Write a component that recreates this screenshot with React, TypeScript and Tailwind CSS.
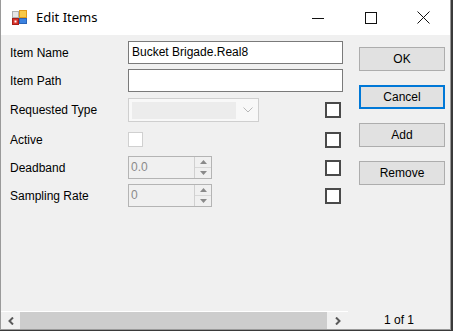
import React from 'react'

const font = { fontFamily: '"Liberation Sans", Arial, sans-serif' }

function AppIcon() {
  return (
    <svg width="15" height="15" viewBox="0 0 15 15">
      <rect x="0.5" y="1.5" width="6" height="6" fill="#e6e6e6" stroke="#b0b0b0" />
      <rect x="7.5" y="0.5" width="7" height="7" fill="#f7c948" stroke="#e09a1a" />
      <rect x="0.5" y="8.5" width="6" height="6" fill="#d8332b" stroke="#a81f18" />
      <rect x="2.5" y="10.5" width="2" height="2" fill="#ffffff" />
      <rect x="7.5" y="8.5" width="7" height="5" fill="#3b82e0" stroke="#2a64b8" />
    </svg>
  )
}

function TitleBar() {
  return (
    <div className="flex h-[35px] items-center bg-white">
      <div className="ml-[11px]">
        <AppIcon />
      </div>
      <span className="ml-[9px] text-[13px] text-black" style={{ fontFamily: '"Noto Sans", sans-serif' }}>
        Edit Items
      </span>
      <div className="ml-auto flex h-full">
        <div className="flex w-[53px] items-center justify-center">
          <svg width="12" height="12" viewBox="0 0 12 12">
            <line x1="0" y1="6.5" x2="12" y2="6.5" stroke="#111" strokeWidth="1" />
          </svg>
        </div>
        <div className="flex w-[53px] items-center justify-center">
          <svg width="12" height="12" viewBox="0 0 12 12">
            <rect x="0.5" y="0.5" width="11" height="11" fill="none" stroke="#111" strokeWidth="1" />
          </svg>
        </div>
        <div className="flex w-[53px] items-center justify-center">
          <svg width="13" height="13" viewBox="0 0 13 13">
            <path d="M0.5 0.5 L12.5 12.5 M12.5 0.5 L0.5 12.5" stroke="#111" strokeWidth="1" />
          </svg>
        </div>
      </div>
    </div>
  )
}

function Check() {
  return <div className="mr-[2px] h-[16px] w-[16px] border-2 border-[#4a4a4a] bg-white" />
}

function Spinner({ value }: { value: string }) {
  return (
    <div className="flex h-[23px] w-[84px] border border-[#b4b4b4] bg-[#f0f0f0]">
      <span className="flex-1 pl-[2px] text-[12px] leading-[21px] text-[#8a8a8a]">{value}</span>
      <div className="flex w-[17px] flex-col border-l border-[#d0d0d0]">
        <div className="flex flex-1 items-center justify-center">
          <svg width="7" height="4" viewBox="0 0 7 4">
            <path d="M0 4 L3.5 0 L7 4 Z" fill="#8a8a8a" />
          </svg>
        </div>
        <div className="h-px bg-[#d8d8d8]" />
        <div className="flex flex-1 items-center justify-center">
          <svg width="7" height="4" viewBox="0 0 7 4">
            <path d="M0 0 L3.5 4 L7 0 Z" fill="#8a8a8a" />
          </svg>
        </div>
      </div>
    </div>
  )
}

function Row({ label, mt, h, children }: { label: string; mt: string; h: string; children: React.ReactNode }) {
  return (
    <div className={`flex items-center ${mt} ${h}`}>
      <span className="w-[118px] text-[12px] text-black">{label}</span>
      <div className="flex w-[215px] items-center justify-between">{children}</div>
    </div>
  )
}

function Button({ label, focused }: { label: string; focused?: boolean }) {
  return (
    <div
      className={`flex h-[24px] w-[86px] items-center justify-center bg-[#e1e1e1] text-[12px] text-black ${
        focused ? 'border-2 border-[#0078d7]' : 'border border-[#adadad]'
      }`}
    >
      {label}
    </div>
  )
}

export default function App() {
  return (
    <div className="h-[331px] w-[453px] bg-[#3a3a3a]" style={font}>
      <div className="flex h-[330px] w-[451px] flex-col border-x border-b border-[#9a9a9a] bg-[#f0f0f0]">
        <TitleBar />

        <div className="flex flex-1">
          <div className="w-[358px] pl-[9px]">
            <Row label="Item Name" mt="mt-[6px]" h="h-[23px]">
              <div className="h-[23px] w-[215px] border border-[#7a7a7a] bg-white pl-[3px] text-[12px] leading-[21px] text-black">
                Bucket Brigade.Real8
              </div>
            </Row>
            <Row label="Item Path" mt="mt-[5px]" h="h-[23px]">
              <div className="h-[23px] w-[215px] border border-[#7a7a7a] bg-white" />
            </Row>
            <Row label="Requested Type" mt="mt-[6px]" h="h-[24px]">
              <div className="flex h-[24px] w-[131px] items-center border border-[#cfcfcf] bg-[#f8f8f8] px-[3px]">
                <div className="h-[17px] w-[104px] bg-[#ececec]" />
                <svg className="ml-auto mr-[2px]" width="10" height="6" viewBox="0 0 10 6">
                  <path d="M0.5 0.5 L5 5 L9.5 0.5" fill="none" stroke="#b8b8b8" strokeWidth="1" />
                </svg>
              </div>
              <Check />
            </Row>
            <Row label="Active" mt="mt-[6px]" h="h-[23px]">
              <div className="h-[15px] w-[15px] border border-[#d0d0d0] bg-white" />
              <Check />
            </Row>
            <Row label="Deadband" mt="mt-[5px]" h="h-[23px]">
              <Spinner value="0.0" />
              <Check />
            </Row>
            <Row label="Sampling Rate" mt="mt-[5px]" h="h-[23px]">
              <Spinner value="0" />
              <Check />
            </Row>
          </div>

          <div className="flex flex-col gap-[14px] pt-[12px]">
            <Button label="OK" />
            <Button label="Cancel" focused />
            <Button label="Add" />
            <Button label="Remove" />
          </div>
        </div>

        <div className="flex h-[18px]">
          <div className="flex w-[347px] border-t border-white">
            <div className="flex w-[19px] items-center justify-center">
              <svg width="6" height="8" viewBox="0 0 6 8">
                <path d="M5 0.5 L1.5 4 L5 7.5" fill="none" stroke="#5a5a5a" strokeWidth="2" />
              </svg>
            </div>
            <div className="w-[307px] bg-[#cdcdcd]" />
            <div className="flex flex-1 items-center justify-center">
              <svg width="6" height="8" viewBox="0 0 6 8">
                <path d="M1 0.5 L4.5 4 L1 7.5" fill="none" stroke="#5a5a5a" strokeWidth="2" />
              </svg>
            </div>
          </div>
          <div className="flex flex-1 items-center justify-center text-[12px] text-black">1 of 1</div>
        </div>
      </div>
    </div>
  )
}
